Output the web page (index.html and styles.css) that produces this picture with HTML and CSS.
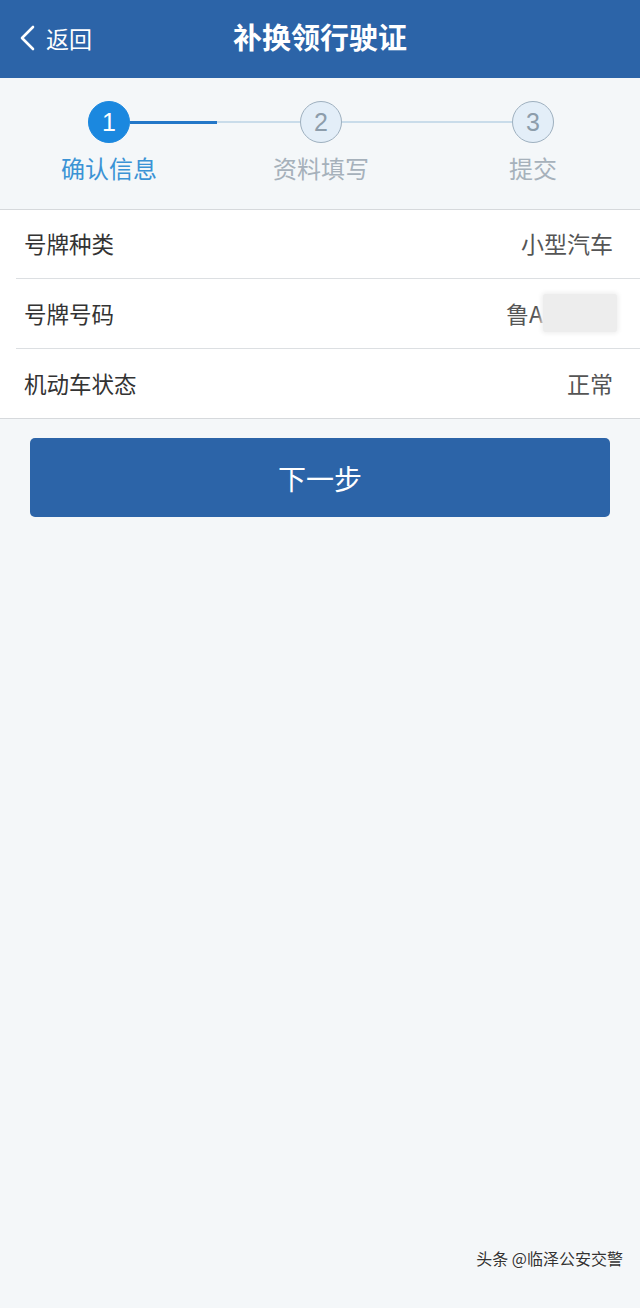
FILE: index.html
```html
<!DOCTYPE html>
<html lang="zh-CN">
<head>
<meta charset="utf-8">
<title>补换领行驶证</title>
<link rel="stylesheet" href="styles.css">
</head>
<body>
<div class="page">
  <header class="topbar">
    <div class="back">
      <svg class="chev" width="18" height="26" viewBox="0 0 18 26"><path d="M15 2 L4 13 L15 24" fill="none" stroke="#fff" stroke-width="2.6" stroke-linecap="round" stroke-linejoin="round"/></svg>
      <span class="back-text">返回</span>
    </div>
    <h1 class="title">补换领行驶证</h1>
  </header>

  <section class="steps">
    <div class="track">
      <div class="dot active">1</div>
      <div class="line"><span class="done"></span></div>
      <div class="dot">2</div>
      <div class="line"></div>
      <div class="dot">3</div>
    </div>
    <div class="labels">
      <span class="lab active">确认信息</span>
      <span class="lab">资料填写</span>
      <span class="lab">提交</span>
    </div>
  </section>

  <section class="list">
    <div class="row r1"><span class="k">号牌种类</span><span class="v">小型汽车</span></div>
    <div class="row r2"><span class="k">号牌号码</span><span class="v">鲁A<span class="blur"></span></span></div>
    <div class="row r3"><span class="k">机动车状态</span><span class="v">正常</span></div>
  </section>

  <div class="btn-wrap"><button class="btn">下一步</button></div>

  <div class="spacer"></div>
  <div class="wm">头条 @临泽公安交警</div>
</div>
</body>
</html>
```
FILE: styles.css
```css
* { box-sizing: border-box; }
html, body { margin: 0; padding: 0; }
body {
  background: #f4f7f9;
  font-family: "Noto Sans CJK SC", "Noto Sans", sans-serif;
  width: 640px;
  height: 1308px;
}
.page { display: flex; flex-direction: column; height: 1308px; }
.topbar {
  height: 78px;
  background: #2c64a8;
  display: flex;
  align-items: center;
  justify-content: center;
  position: relative;
  color: #fff;
}
.back {
  position: absolute;
  left: 18px;
  top: 0;
  height: 78px;
  display: flex;
  align-items: center;
  gap: 10px;
}
.chev { display: block; margin-top: -2px; }
.back-text { font-size: 23px; line-height: 1; margin-top: -2px; }
.title {
  margin: 0;
  font-size: 29px;
  font-weight: 700;
  line-height: 1;
  margin-top: -6px;
}
.steps {
  height: 131px;
  padding-top: 23px;
}
.track {
  display: flex;
  align-items: center;
  padding-left: 88px;
}
.dot {
  width: 42px;
  height: 42px;
  border-radius: 50%;
  border: 1.5px solid #9eb0bf;
  background: #e3eef8;
  color: #8d9dab;
  font-family: "Liberation Sans", Arial, sans-serif;
  font-size: 25px;
  display: flex;
  align-items: center;
  justify-content: center;
  flex: none;
}
.dot.active {
  background: #1b88df;
  border-color: #1b88df;
  color: #fff;
}
.line {
  width: 170px;
  height: 2px;
  background: #c9dcea;
  flex: none;
}
.line .done {
  display: block;
  width: 87px;
  height: 3px;
  margin-top: -0.5px;
  background: #2377c8;
}
.labels {
  display: grid;
  grid-template-columns: 212px 212px 212px;
  padding-left: 3px;
  margin-top: 12px;
}
.lab {
  text-align: center;
  font-size: 24px;
  line-height: 26px;
  color: #a6b1bb;
}
.lab.active { color: #3b93d5; }
.list {
  background: #fff;
  border-top: 1px solid #d6d9dc;
  border-bottom: 1px solid #d6d9dc;
}
.row {
  height: 69px;
  margin-left: 16px;
  padding: 0 27px 2px 8px;
  display: flex;
  align-items: center;
  justify-content: space-between;
  border-bottom: 1px solid #dcdfe2;
  font-size: 22.5px;
}
.row.r2 { height: 70px; }
.row.r3 { border-bottom: none; height: 69px; }
.k { color: #333; }
.v { color: #555; display: flex; align-items: center; font-size: 23px; }
.blur {
  display: inline-block;
  width: 74px;
  height: 38px;
  background: #ededed;
  border-radius: 3px;
  box-shadow: 0 0 4px 2px #f1f1f1;
  margin-right: -4px;
}
.btn-wrap { padding: 19px 30px 0; }
.btn {
  width: 580px;
  height: 79px;
  border: none;
  border-radius: 5px;
  background: #2c64a8;
  color: #fff;
  font-family: "Noto Sans CJK SC", sans-serif;
  font-size: 28px;
  display: flex;
  align-items: center;
  justify-content: center;
  padding: 0;
}
.spacer { flex: 1; }
.wm {
  align-self: flex-end;
  margin: 0 17px 38px 0;
  font-size: 16px;
  color: #333;
  text-shadow: 0 0 2px #fff, 0 0 2px #fff;
}
```
